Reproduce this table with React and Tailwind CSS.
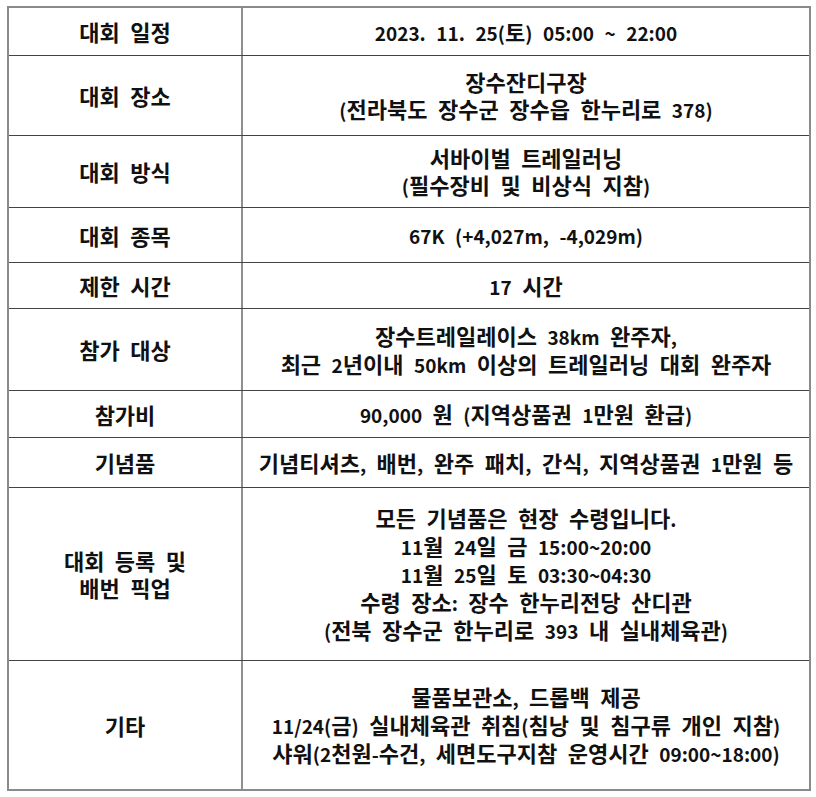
const rows = [
  { h: 'h-[47px]', label: ['대회 일정'], value: ['2023. 11. 25(토) 05:00 ~ 22:00'] },
  { h: 'h-[80px]', label: ['대회 장소'], value: ['장수잔디구장', '(전라북도 장수군 장수읍 한누리로 378)'] },
  { h: 'h-[72px]', label: ['대회 방식'], value: ['서바이벌 트레일러닝', '(필수장비 및 비상식 지참)'] },
  { h: 'h-[55px]', label: ['대회 종목'], value: ['67K (+4,027m, -4,029m)'] },
  { h: 'h-[46px]', label: ['제한 시간'], value: ['17 시간'] },
  { h: 'h-[82px]', label: ['참가 대상'], value: ['장수트레일레이스 38km 완주자,', '최근 2년이내 50km 이상의 트레일러닝 대회 완주자'] },
  { h: 'h-[47px]', label: ['참가비'], value: ['90,000 원 (지역상품권 1만원 환급)'] },
  { h: 'h-[50px]', label: ['기념품'], value: ['기념티셔츠, 배번, 완주 패치, 간식, 지역상품권 1만원 등'] },
  {
    h: 'h-[173px]',
    label: ['대회 등록 및', '배번 픽업'],
    value: [
      '모든 기념품은 현장 수령입니다.',
      '11월 24일 금 15:00~20:00',
      '11월 25일 토 03:30~04:30',
      '수령 장소: 장수 한누리전당 산디관',
      '(전북 장수군 한누리로 393 내 실내체육관)',
    ],
  },
  {
    h: 'h-[129px]',
    label: ['기타'],
    value: [
      '물품보관소, 드롭백 제공',
      '11/24(금) 실내체육관 취침(침낭 및 침구류 개인 지참)',
      '샤워(2천원-수건, 세면도구지참 운영시간 09:00~18:00)',
    ],
  },
];

function Line({ text }) {
  const parts = text.split(/([A-Za-z0-9.,:;()~+\-\/]+)/);
  return (
    <div>
      {parts.map((p, k) =>
        k % 2 === 1 ? (
          <span key={k} className="text-[19px]">
            {p}
          </span>
        ) : (
          <span key={k}>{p}</span>
        )
      )}
    </div>
  );
}

export default function App() {
  return (
    <div
      className="w-[816px] h-[797px] bg-white pt-[6px] pl-[7px] text-[#111] font-bold text-[22px] leading-[27px] [word-spacing:0.25em]"
      style={{ fontFamily: '"Noto Sans CJK KR", "Noto Sans", sans-serif' }}
    >
      <div className="w-[804px] border-2 border-[#8a8a8a]">
        {rows.map((r, i) => (
          <div
            key={i}
            className={`flex ${r.h} ${i > 0 ? 'border-t border-[#444]' : ''}`}
          >
            <div className="w-[234px] shrink-0 border-r-2 border-[#8f8f8f] flex flex-col items-center justify-center text-center">
              {r.label.map((l, j) => (
                <Line key={j} text={l} />
              ))}
            </div>
            <div className="flex-1 flex flex-col items-center justify-center text-center whitespace-nowrap">
              {r.value.map((v, j) => (
                <Line key={j} text={v} />
              ))}
            </div>
          </div>
        ))}
      </div>
    </div>
  );
}
